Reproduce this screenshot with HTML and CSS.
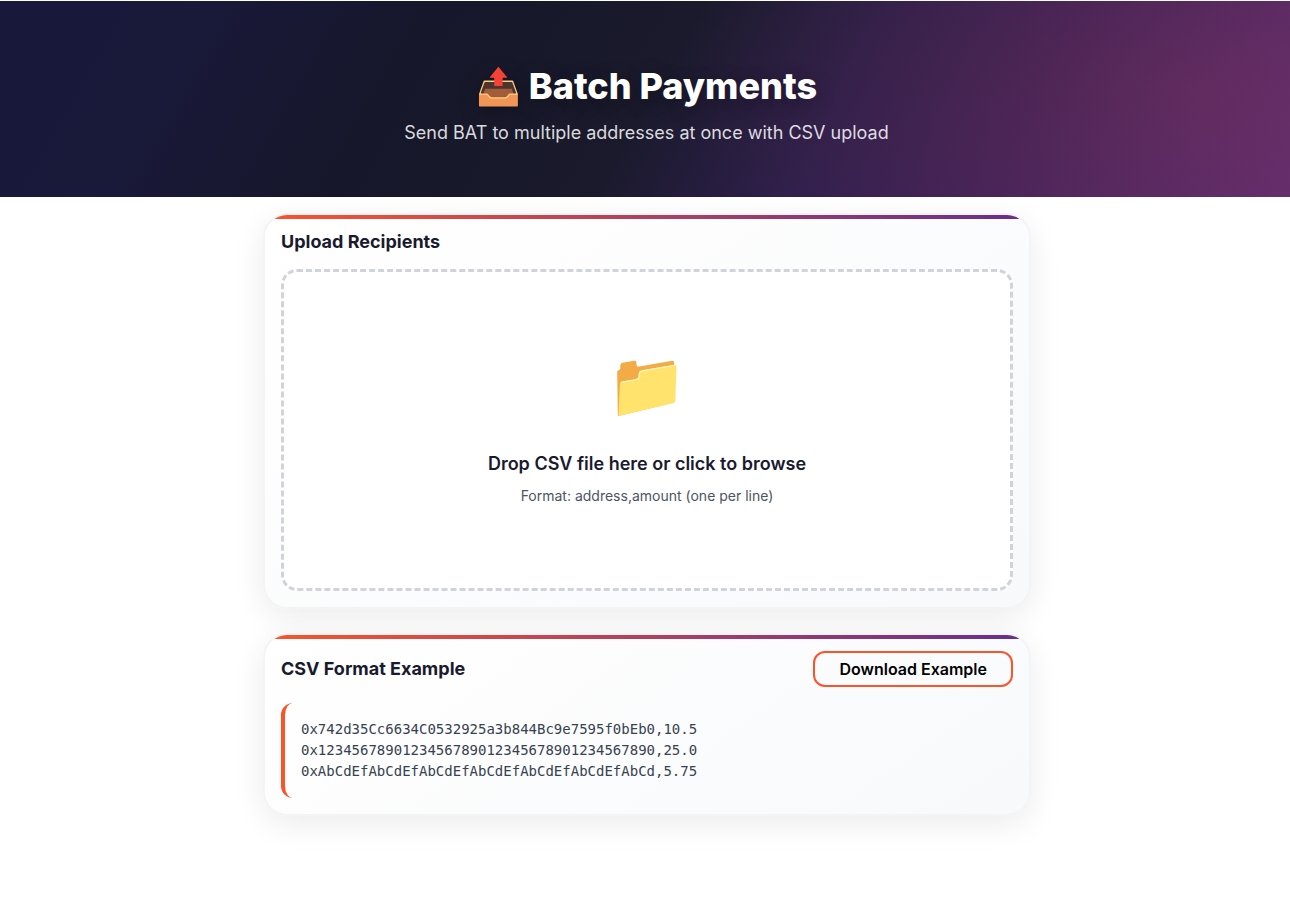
FILE: index.html
```html
<!DOCTYPE html>
<html lang="en">
<head>
<meta charset="utf-8">
<meta name="viewport" content="width=device-width, initial-scale=1">
<title>Batch Payments</title>
<link rel="stylesheet" href="styles.css">
</head>
<body>
<header class="hero">
  <h1 class="hero-title">📤 Batch Payments</h1>
  <p class="hero-subtitle">Send BAT to multiple addresses at once with CSV upload</p>
</header>
<main class="content">
  <section class="card">
    <h2 class="card-title">Upload Recipients</h2>
    <button class="dropzone" type="button">
      <span class="drop-icon">📁</span>
      <span class="drop-text">Drop CSV file here or click to browse</span>
      <span class="drop-hint">Format: address,amount (one per line)</span>
    </button>
  </section>
  <section class="card">
    <div class="card-head">
      <h2 class="card-title">CSV Format Example</h2>
      <button class="button" type="button">Download Example</button>
    </div>
    <pre class="code">0x742d35Cc6634C0532925a3b844Bc9e7595f0bEb0,10.5
0x1234567890123456789012345678901234567890,25.0
0xAbCdEfAbCdEfAbCdEfAbCdEfAbCdEfAbCdEfAbCd,5.75</pre>
  </section>
</main>
</body>
</html>
```
FILE: styles.css
```css
* { box-sizing: border-box; }
body {
  margin: 0;
  padding-top: 1px;
  background: #fff;
  color: #1a1a2e;
  font-family: Inter, "Liberation Sans", sans-serif;
}
h1, h2, p, pre { margin: 0; }
.hero {
  padding: 56px 16px 48px 19px;
  text-align: center;
  color: #fff;
  background:
    radial-gradient(ellipse 40% 140% at 92% 45%, rgba(251, 84, 43, 0.11), transparent),
    linear-gradient(120deg, #17183a 0%, #19193a 14%, #16172a 32%, #1a1a2c 50%, #2e1f4c 64%, #40225a 78%, #5c2b70 100%);
}
.hero-title {
  font-size: 36px;
  line-height: 58px;
  font-weight: 800;
  text-shadow: 0 4px 20px rgba(0, 0, 0, 0.3);
}
.hero-subtitle {
  margin-top: 4px;
  padding-bottom: 2px;
  font-size: 18px;
  line-height: 28px;
  color: rgba(255, 255, 255, 0.85);
}
.content {
  display: flex;
  flex-direction: column;
  gap: 24px;
  max-width: 800px;
  margin: 0 auto;
  padding: 16px 14px 64px 18px;
}
.card {
  position: relative;
  overflow: hidden;
  padding: 16px;
  border: 2px solid #f3f4f5;
  border-radius: 24px;
  background: linear-gradient(145deg, #fff, #f8f9fb);
  box-shadow: 0 8px 32px rgba(0, 0, 0, 0.08);
}
.card::before {
  content: "";
  position: absolute;
  inset: 0 0 auto;
  height: 4px;
  background: linear-gradient(90deg, #fb542b, #662d91);
}
.card-title {
  font-size: 18px;
  line-height: 22px;
  font-weight: 700;
}
.dropzone {
  display: flex;
  flex-direction: column;
  align-items: center;
  width: 100%;
  margin-top: 16px;
  padding: 61px 16px 81px;
  border: 3px dashed #d1d3db;
  border-radius: 16px;
  background: #fff;
  color: #1a1a2e;
  font-family: inherit;
}
.drop-icon { font-size: 64px; line-height: 102px; }
.drop-text {
  margin-top: 16px;
  font-size: 18px;
  line-height: 26px;
  font-weight: 600;
}
.drop-hint {
  margin-top: 8px;
  font-size: 14px;
  line-height: 22px;
  color: #4b5563;
}
.card-head {
  display: flex;
  align-items: center;
  justify-content: space-between;
}
.button {
  padding: 6px 24px;
  border: 2px solid #fb542b;
  border-radius: 12px;
  background: transparent;
  color: #000;
  font: 600 16px/20px Inter, sans-serif;
}
.code {
  margin-top: 16px;
  padding: 16px;
  border-left: 4px solid #fb542b;
  border-radius: 12px;
  color: #374151;
  font: 14px/21px "DejaVu Sans Mono", monospace;
  overflow-x: auto;
}
```
